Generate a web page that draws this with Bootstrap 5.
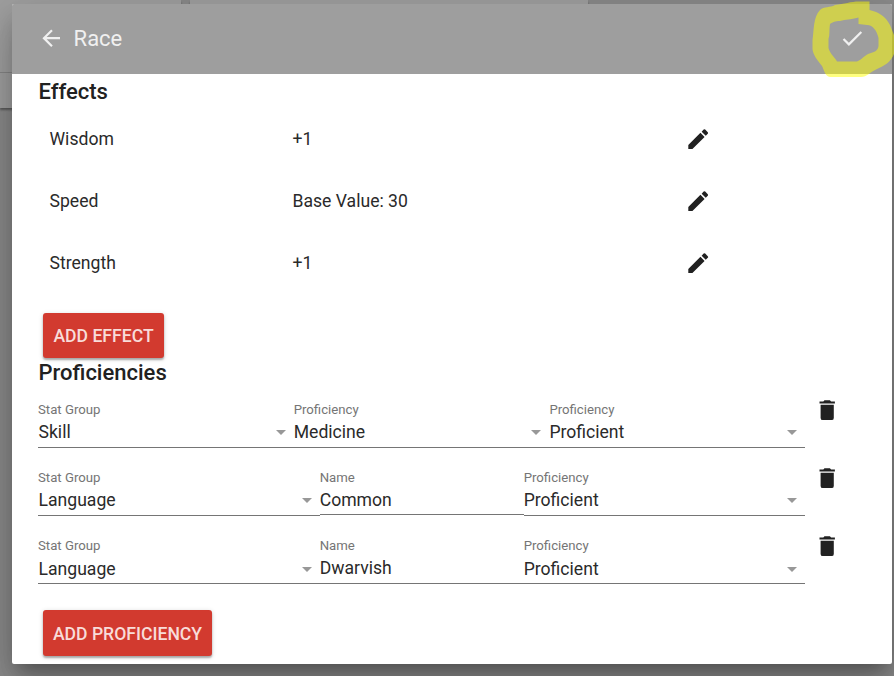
<!DOCTYPE html>
<html lang="en">
<head>
<meta charset="utf-8">
<meta name="viewport" content="width=device-width, initial-scale=1">
<title>Race</title>
<link rel="stylesheet" href="https://cdn.jsdelivr.net/npm/bootstrap@5.3.0/dist/css/bootstrap.min.css">
<style>
body{font-family:Roboto,sans-serif;font-size:17.6px;line-height:24px;color:#212121;background:#8b8b8b;width:894px;height:676px;overflow:hidden}
.page-under{height:108px;inset:0 0 auto 0}
.sheet{background:#a0a0a0;box-shadow:0 2px 2px rgba(0,0,0,.35)}
.sheet-a{width:181px}
.sheet-a i{height:73px;border-bottom:1px solid #868686}
.sheet-b{width:398px;margin-left:9px}
.dialog-wrap{padding:4px 2px 12px 12px;height:676px}
.dialog-box{background:#fff;border-radius:2px;box-shadow:0 12px 17px -7px rgba(0,0,0,.3),0 26px 42px 3px rgba(0,0,0,.12),0 10px 50px 9px rgba(0,0,0,.12)}
.toolbar{height:70px;background:#9e9e9e;color:#f0f0f0;font-size:22px;padding:0 26.5px 1px 26px;border-radius:2px 2px 0 0}
.toolbar svg{width:26.4px;height:26.4px}
.toolbar h1{font-size:22px;font-weight:400;margin:1px 0 0 9.2px}
.pane{padding:5px 70px 0 26px}
.heading{font-size:22px;line-height:26px;font-weight:500;padding-left:.5px}
.effects-title{margin-bottom:3px}
.effect{height:62px;padding-left:11.5px}
.effect-name{width:243px}
.effect-value{width:392.3px}
.effect-name,.effect-value,.field-value{color:#2a2a2a}
.effect svg,.bin svg{width:26.4px;height:26.4px;display:block}
.btn-red,.btn-red:hover{background:#d23a2f;color:#f8dcd9}
.btn-red{font-size:17.6px;line-height:24px;font-weight:500;border:0;border-radius:3px;margin-left:5px;padding:0;box-shadow:0 2px 2px rgba(0,0,0,.28),0 1px 5px rgba(0,0,0,.16);text-align:center}
.btn-effect{width:121px;height:45px;margin-top:19px}
.btn-prof{width:169px;height:46px;margin-top:6px;padding-top:1px}
.profs{padding-top:26px}
.profs-title{line-height:22px;padding-top:4px}
.prof{height:68px}
.field{height:48px;border-bottom:1px solid #757575;padding-top:1px}
.field.typed{height:47px}
.field label{font-size:13.2px;line-height:18px;color:#757575;display:block}
.field-value{height:26px;padding-right:8px}
.field-value.first{padding-left:.5px}
.field-value.low{padding-top:2px}
.caret{width:0;height:0;border:5.5px solid transparent;border-top-color:#989898;border-bottom:0;margin-top:1px}
.low .caret{margin-top:0}
.wide{width:255.7px}.w-lang{width:281.7px}.w-name{width:204px}.w-rank{width:281.1px}
.bin{margin-left:9px;margin-right:-1px;margin-top:-3px}
.bin svg{margin-left:.3px}
.scroller{width:17px;background:#f0f0f0}
.arrow-cell{height:17px}
.thumb{width:13px;height:469px;margin-top:71px;background:#c1c1c1}
.marker{left:794px;top:0}
</style>
<script src="https://cdn.jsdelivr.net/npm/bootstrap@5.3.0/dist/js/bootstrap.bundle.min.js"></script>
</head>
<body class="position-relative">
<svg width="0" height="0" class="position-absolute">
<symbol id="pencil" viewBox="0 0 24 24"><path d="M3 17.250V21h3.750L17.810 9.940l-3.750-3.750L3 17.250zM20.710 7.040a1 1 0 0 0 0-1.410l-2.340-2.340a1 1 0 0 0-1.410 0l-1.830 1.830 3.750 3.750 1.830-1.830z"/></symbol>
<symbol id="trash" viewBox="0 0 24 24"><path d="M6 19a2 2 0 0 0 2 2h8a2 2 0 0 0 2-2V7H6v12zM19 4h-3.500l-1-1h-5l-1 1H5v2h14V4z"/></symbol>
</svg>
<div class="page-under position-absolute d-flex">
<div class="sheet sheet-a"><i class="d-block"></i></div>
<div class="sheet sheet-b"></div>
</div>
<div class="dialog-wrap position-relative">
<div class="dialog-box d-flex flex-column h-100">
<header class="toolbar d-flex align-items-center">
<svg viewBox="0 0 24 24" fill="currentColor"><path d="M20 11H7.830l5.590-5.590L12 4l-8 8 8 8 1.410-1.410L7.830 13H20v-2z"/></svg>
<h1>Race</h1>
<svg class="ms-auto" viewBox="0 0 24 24" fill="currentColor"><path d="M9 16.170L4.830 12l-1.420 1.410L9 19 21 7l-1.410-1.410z"/></svg>
</header>
<div class="d-flex flex-grow-1">
<main class="pane flex-grow-1">
<h2 class="heading effects-title">Effects</h2>
<div class="effect d-flex align-items-center"><div class="effect-name">Wisdom</div><div class="effect-value">+1</div><svg fill="currentColor"><use href="#pencil"/></svg></div>
<div class="effect d-flex align-items-center"><div class="effect-name">Speed</div><div class="effect-value">Base Value: 30</div><svg fill="currentColor"><use href="#pencil"/></svg></div>
<div class="effect d-flex align-items-center"><div class="effect-name">Strength</div><div class="effect-value">+1</div><svg fill="currentColor"><use href="#pencil"/></svg></div>
<button class="btn btn-red btn-effect d-block">ADD EFFECT</button>
<h2 class="heading profs-title mb-0">Proficiencies</h2>
<div class="profs pt-3">
<div class="prof d-flex align-items-start">
<div class="field wide"><label>Stat Group</label><div class="field-value first d-flex align-items-center justify-content-between">Skill<span class="caret"></span></div></div>
<div class="field wide"><label>Proficiency</label><div class="field-value d-flex align-items-center justify-content-between">Medicine<span class="caret"></span></div></div>
<div class="field wide"><label>Proficiency</label><div class="field-value d-flex align-items-center justify-content-between">Proficient<span class="caret"></span></div></div>
<div class="bin"><svg fill="currentColor"><use href="#trash"/></svg></div>
</div>
<div class="prof d-flex align-items-start">
<div class="field w-lang"><label>Stat Group</label><div class="field-value first d-flex align-items-center justify-content-between">Language<span class="caret"></span></div></div>
<div class="field typed w-name"><label>Name</label><div class="field-value d-flex align-items-center">Common</div></div>
<div class="field w-rank"><label>Proficiency</label><div class="field-value d-flex align-items-center justify-content-between">Proficient<span class="caret"></span></div></div>
<div class="bin"><svg fill="currentColor"><use href="#trash"/></svg></div>
</div>
<div class="prof d-flex align-items-start">
<div class="field w-lang"><label>Stat Group</label><div class="field-value low first d-flex align-items-center justify-content-between">Language<span class="caret"></span></div></div>
<div class="field w-name"><label>Name</label><div class="field-value d-flex align-items-center">Dwarvish</div></div>
<div class="field w-rank"><label>Proficiency</label><div class="field-value low d-flex align-items-center justify-content-between">Proficient<span class="caret"></span></div></div>
<div class="bin"><svg fill="currentColor"><use href="#trash"/></svg></div>
</div>
</div>
<button class="btn btn-red btn-prof d-block">ADD PROFICIENCY</button>
</main>
<div class="scroller d-flex flex-column align-items-center">
<div class="arrow-cell d-flex align-items-center"><svg width="8" height="5" viewBox="0 0 8 5"><path d="M0 5 4 1 8 5z" fill="#505050"/></svg></div>
<div class="thumb"></div>
<div class="arrow-cell d-flex align-items-center mt-auto"><svg width="8" height="5" viewBox="0 0 8 5"><path d="M0 0 4 4 8 0z" fill="#505050"/></svg></div>
</div>
</div>
</div>
</div>
<svg class="marker position-absolute" width="100" height="90" viewBox="0 0 100 90"><path fill="#ffff00" fill-opacity=".5" fill-rule="evenodd" d="M75.500 1.500V10C85 12 92 17 96 25L100 35V54C97 62 90 66 83 69C76 72 73 77 67 77H36C31 76 30 70 28 66C24 61 19 55 18.500 49V40C20 31 19 17 26 10C30 6 36 8 41 5C50 4 57 1.500 65 1.500ZM64.500 17.500C56 20 52 19 46 21C41 21 39 22 36 24C35 30 36 35 34.500 39V48C36 54 40 56 43 61.500H63C69 59 70 55 77 53C81 52 84 50 84.500 46V38C83 31 79 25 73 25L64.500 24Z"/></svg>
</body>
</html>
